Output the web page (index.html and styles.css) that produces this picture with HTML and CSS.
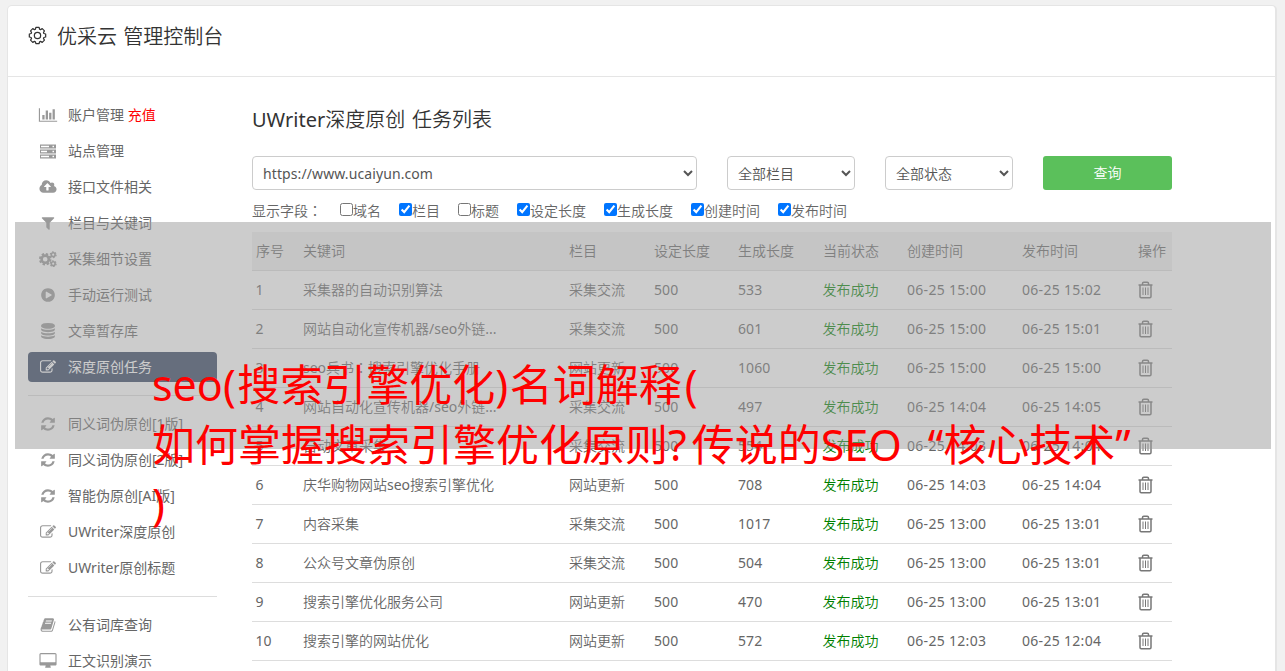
FILE: index.html
```
<!DOCTYPE html>
<html lang="zh-CN">

<head>
    <meta charset="UTF-8">
    <meta name="viewport" content="width=device-width, initial-scale=1.0">
    <title>优采云 管理控制台</title>
    <link rel="stylesheet" href="styles.css">
</head>

<body>
    <!-- Icon sprite -->
    <svg class="sprite" aria-hidden="true">
        <symbol id="i-chart" viewBox="0 0 2048 1792"><path d="M640 896v512h-256v-512h256zm384-512v1024h-256v-1024h256zm1024 1152v128h-2048v-1536h128v1408h1920zm-640-896v768h-256v-768h256zm384-384v1152h-256v-1152h256z"/></symbol>
        <symbol id="i-server" viewBox="0 0 18 16"><path fill-rule="evenodd" d="M1 1.5h16v4H1zM2 2.8v1.4h8V2.8zM1 6.5h16v4H1zM2 7.8v1.4h6V7.8zM1 11.5h16v4H1zM2 12.8v1.4h8v-1.4zM13.5 2.8v1.4H15V2.8zM13.5 7.8v1.4H15V7.8zM13.5 12.8v1.4H15v-1.4z"/></symbol>
        <symbol id="i-cloud" viewBox="0 0 1920 1792"><path d="M1280 864q0-14-9-23l-352-352q-9-9-23-9t-23 9l-351 351q-10 12-10 24 0 14 9 23t23 9h224v352q0 13 9.5 22.5t22.5 9.5h192q13 0 22.5-9.5t9.5-22.5v-352h224q13 0 22.5-9.5t9.5-22.5zm640 288q0 159-112.5 271.5t-271.5 112.5h-1088q-185 0-316.5-131.5t-131.5-316.5q0-130 70-240t188-165q-2-30-2-43 0-212 150-362t362-150q156 0 285.5 87t188.5 231q71-62 166-62 106 0 181 75t75 181q0 76-41 138 130 31 213.5 135.5t83.5 238.5z"/></symbol>
        <symbol id="i-filter" viewBox="0 0 1792 1792"><path d="M1595 295q17 41-14 70l-493 493v742q0 42-39 59-13 5-25 5-27 0-45-19l-256-256q-19-19-19-45v-486l-493-493q-31-29-14-70 17-39 59-39h1280q42 0 59 39z"/></symbol>
        <symbol id="i-cogs" viewBox="0 0 18 16">
            <g fill="none" stroke="currentColor">
                <circle cx="6.2" cy="8.2" r="3.6" stroke-width="2.6"/>
                <circle cx="6.2" cy="8.2" r="5.3" stroke-width="1.9" stroke-dasharray="2.4 1.76"/>
                <circle cx="14.2" cy="3.7" r="1.9" stroke-width="1.6"/>
                <circle cx="14.2" cy="3.7" r="2.9" stroke-width="1.2" stroke-dasharray="1.52 1.52"/>
                <circle cx="14.2" cy="12.7" r="1.9" stroke-width="1.6"/>
                <circle cx="14.2" cy="12.7" r="2.9" stroke-width="1.2" stroke-dasharray="1.52 1.52"/>
            </g>
        </symbol>
        <symbol id="i-play" viewBox="0 0 1792 1792"><path d="M896 128q209 0 385.5 103t279.5 279.5 103 385.5-103 385.5-279.5 279.5-385.5 103-385.5-103-279.5-279.5-103-385.5 103-385.5 279.5-279.5 385.5-103zm384 823q32-18 32-55t-32-55l-544-320q-31-19-64-1-32 19-32 56v640q0 37 32 56 16 8 32 8 17 0 32-9z"/></symbol>
        <symbol id="i-database" viewBox="0 0 1792 1792"><path d="M896 768q237 0 443-43t325-127v170q0 69-103 128t-280 93.5-385 34.5-385-34.5-280-93.5-103-128v-170q119 84 325 127t443 43zm0 768q237 0 443-43t325-127v170q0 69-103 128t-280 93.5-385 34.5-385-34.5-280-93.5-103-128v-170q119 84 325 127t443 43zm0-384q237 0 443-43t325-127v170q0 69-103 128t-280 93.5-385 34.5-385-34.5-280-93.5-103-128v-170q119 84 325 127t443 43zm0-1152q208 0 385 34.5t280 93.5 103 128v128q0 69-103 128t-280 93.5-385 34.5-385-34.5-280-93.5-103-128v-128q0-69 103-128t280-93.5 385-34.5z"/></symbol>
        <symbol id="i-edit" viewBox="0 0 1792 1792"><path d="M888 1184l116-116-152-152-116 116v56h96v96h56zm440-720q-16-16-33 1l-350 350q-17 17-1 33t33-1l350-350q17-17 1-33zm80 594v190q0 119-84.5 203.5t-203.5 84.5h-832q-119 0-203.5-84.5t-84.5-203.5v-832q0-119 84.5-203.5t203.5-84.5h832q63 0 117 25 15 7 18 23 3 17-9 29l-49 49q-14 14-32 8-23-6-45-6h-832q-66 0-113 47t-47 113v832q0 66 47 113t113 47h832q66 0 113-47t47-113v-126q0-13 9-22l64-64q15-15 35-7t20 29zm-96-738l288 288-672 672h-288v-288zm444 132l-92 92-288-288 92-92q28-28 68-28t68 28l152 152q28 28 28 68t-28 68z"/></symbol>
        <symbol id="i-refresh" viewBox="0 0 1792 1792"><path d="M1639 1056q0 5-1 7-64 268-268 434.5t-478 166.5q-146 0-282.5-55t-243.5-157l-129 129q-19 19-45 19t-45-19-19-45v-448q0-26 19-45t45-19h448q26 0 45 19t19 45-19 45l-137 137q71 66 161 102t187 36q134 0 250-65t186-179q11-17 53-117 8-23 30-23h192q13 0 22.5 9.5t9.5 22.5zm25-800v448q0 26-19 45t-45 19h-448q-26 0-45-19t-19-45 19-45l138-138q-148-137-349-137-134 0-250 65t-186 179q-11 17-53 117-8 23-30 23h-199q-13 0-22.5-9.5t-9.5-22.5v-7q65-268 270-434.5t480-166.5q146 0 284 55.5t245 156.5l130-129q19-19 45-19t45 19 19 45z"/></symbol>
        <symbol id="i-book" viewBox="0 0 1792 1792"><path d="M1703 478q40 57 18 129l-275 906q-19 64-76.5 107.5t-122.5 43.5h-923q-77 0-148.5-53.5t-99.5-131.5q-24-67-2-127 0-4 3-27t4-37q1-8-3-21.5t-3-19.5q2-11 8-21t16.5-23.5 16.5-23.5q23-38 45-91.5t30-91.5q3-10 .5-30t-.5-28q3-11 17-28t17-23q21-36 42-92t25-90q1-9-2.5-32t.5-28q4-13 22-30.5t22-22.5q19-26 42.5-84.5t27.5-96.5q1-8-3-25.5t-2-26.5q2-8 9-18t18-23 17-21q8-12 16.5-30.5t15-35 16-36 19.5-32 26.5-23.5 36-11.5 47.5 5.5l-1 3q38-9 51-9h761q74 0 114 56t18 130l-274 906q-36 119-71.5 153.5t-128.5 34.5h-869q-27 0-38 15-11 16-1 43 24 70 144 70h923q29 0 56-15.5t35-41.5l300-987q7-22 5-57 38 15 59 43zm-1064 2q-4 13 2 22.5t20 9.5h608q13 0 25.5-9.5t16.5-22.5l21-64q4-13-2-22.5t-20-9.5h-608q-13 0-25.5 9.5t-16.5 22.5zm-83 256q-4 13 2 22.5t20 9.5h608q13 0 25.5-9.5t16.5-22.5l21-64q4-13-2-22.5t-20-9.5h-608q-13 0-25.5 9.5t-16.5 22.5z"/></symbol>
        <symbol id="i-desktop" viewBox="0 0 1920 1792"><path d="M1792 992v-832q0-13-9.5-22.5t-22.5-9.5h-1600q-13 0-22.5 9.5t-9.5 22.5v832q0 13 9.5 22.5t22.5 9.5h1600q13 0 22.5-9.5t9.5-22.5zm128-832v1088q0 66-47 113t-113 47h-544q0 37 16 77.5t32 71 16 43.5q0 26-19 45t-45 19h-512q-26 0-45-19t-19-45q0-14 16-44t32-70 16-78h-544q-66 0-113-47t-47-113v-1088q0-66 47-113t113-47h1600q66 0 113 47t47 113z"/></symbol>
        <symbol id="i-trash" viewBox="0 0 16 18">
            <g fill="none" stroke="currentColor">
                <path stroke-width="1.5" d="M.5 4h14M4.5 3.8V2.6Q4.5 1.3 5.8 1.3h3.4Q10.5 1.3 10.5 2.6v1.2M2 4.2v11.3q0 1.2 1.2 1.2h8.6q1.2 0 1.2-1.2V4.2"/>
                <path stroke-width="1" d="M5 6.5v7.5M7.5 6.5v7.5M10 6.5v7.5"/>
            </g>
        </symbol>
        <symbol id="i-gear" viewBox="0 0 20 20">
            <g fill="none" stroke="currentColor" stroke-width="1.3">
                <circle cx="10" cy="10" r="3.3"/>
                <path stroke-linejoin="round" d="M8.3 1.5h3.4l.5 1.9 1 .4 1.8-1 2.3 2.3-1 1.8.4 1 1.9.5v3.2l-1.9.5-.4 1 1 1.8-2.3 2.3-1.8-1-1 .4-.5 1.9H8.3l-.5-1.9-1-.4-1.8 1-2.3-2.3 1-1.8-.4-1-1.9-.5V8.4l1.9-.5.4-1-1-1.8L5 2.8l1.8 1 1-.4z"/>
            </g>
        </symbol>
    </svg>

    <div class="panel">
        <header class="panel-header">
            <svg class="gear"><use href="#i-gear"/></svg>
            <h1>优采云 管理控制台</h1>
        </header>

        <div class="panel-body">
            <nav class="sidebar">
                <ul>
                    <li><svg><use href="#i-chart"/></svg><a>账户管理 <span class="recharge">充值</span></a></li>
                    <li><svg><use href="#i-server"/></svg><a>站点管理</a></li>
                    <li><svg><use href="#i-cloud"/></svg><a>接口文件相关</a></li>
                    <li><svg><use href="#i-filter"/></svg><a>栏目与关键词</a></li>
                    <li><svg><use href="#i-cogs"/></svg><a>采集细节设置</a></li>
                    <li><svg><use href="#i-play"/></svg><a>手动运行测试</a></li>
                    <li><svg><use href="#i-database"/></svg><a>文章暂存库</a></li>
                    <li class="active"><svg><use href="#i-edit"/></svg><a>深度原创任务</a></li>
                </ul>
                <ul>
                    <li><svg><use href="#i-refresh"/></svg><a>同义词伪原创[1版]</a></li>
                    <li><svg><use href="#i-refresh"/></svg><a>同义词伪原创[2版]</a></li>
                    <li><svg><use href="#i-refresh"/></svg><a>智能伪原创[AI版]</a></li>
                    <li><svg><use href="#i-edit"/></svg><a><span class="latin">UWriter</span>深度原创</a></li>
                    <li><svg><use href="#i-edit"/></svg><a><span class="latin">UWriter</span>原创标题</a></li>
                </ul>
                <ul>
                    <li><svg><use href="#i-book"/></svg><a>公有词库查询</a></li>
                    <li><svg><use href="#i-desktop"/></svg><a>正文识别演示</a></li>
                </ul>
            </nav>

            <main class="content">
                <h2><span class="latin">UWriter</span>深度原创 任务列表</h2>

                <form class="filters">
                    <select class="site"><option>https://www.ucaiyun.com</option></select>
                    <select><option>全部栏目</option></select>
                    <select><option>全部状态</option></select>
                    <button type="button">查询</button>
                </form>

                <div class="fields">
                    <span class="fields-title">显示字段<span class="colon" lang="zh-TW">：</span></span>
                    <label><input type="checkbox">域名</label>
                    <label><input type="checkbox" checked>栏目</label>
                    <label><input type="checkbox">标题</label>
                    <label><input type="checkbox" checked>设定长度</label>
                    <label><input type="checkbox" checked>生成长度</label>
                    <label><input type="checkbox" checked>创建时间</label>
                    <label><input type="checkbox" checked>发布时间</label>
                </div>

                <table class="tasks">
                    <colgroup>
                        <col class="c-id"><col class="c-word"><col class="c-cat"><col class="c-set"><col class="c-len"><col class="c-state"><col class="c-time"><col class="c-pub"><col class="c-op">
                    </colgroup>
                    <thead>
                        <tr><th>序号</th><th>关键词</th><th>栏目</th><th>设定长度</th><th>生成长度</th><th>当前状态</th><th>创建时间</th><th>发布时间</th><th>操作</th></tr>
                    </thead>
                    <tbody>
                        <tr><td class="num">1</td><td>采集器的自动识别算法</td><td>采集交流</td><td class="num">500</td><td class="num">533</td><td class="ok">发布成功</td><td class="time">06-25 15:00</td><td class="time">06-25 15:02</td><td><svg><use href="#i-trash"/></svg></td></tr>
                        <tr><td class="num">2</td><td>网站自动化宣传机器<span class="latin">/seo</span>外链<span class="latin">...</span></td><td>采集交流</td><td class="num">500</td><td class="num">601</td><td class="ok">发布成功</td><td class="time">06-25 15:00</td><td class="time">06-25 15:01</td><td><svg><use href="#i-trash"/></svg></td></tr>
                        <tr><td class="num">3</td><td><span class="latin">seo</span>兵书<span class="colon" lang="zh-TW">：</span>搜索引擎优化手册</td><td>网站更新</td><td class="num">500</td><td class="num">1060</td><td class="ok">发布成功</td><td class="time">06-25 15:00</td><td class="time">06-25 15:00</td><td><svg><use href="#i-trash"/></svg></td></tr>
                        <tr><td class="num">4</td><td>网站自动化宣传机器<span class="latin">/seo</span>外链<span class="latin">...</span></td><td>采集交流</td><td class="num">500</td><td class="num">497</td><td class="ok">发布成功</td><td class="time">06-25 14:04</td><td class="time">06-25 14:05</td><td><svg><use href="#i-trash"/></svg></td></tr>
                        <tr><td class="num">5</td><td>自动文章采集</td><td>采集交流</td><td class="num">500</td><td class="num">554</td><td class="ok">发布成功</td><td class="time">06-25 14:03</td><td class="time">06-25 14:04</td><td><svg><use href="#i-trash"/></svg></td></tr>
                        <tr><td class="num">6</td><td>庆华购物网站<span class="latin">seo</span>搜索引擎优化</td><td>网站更新</td><td class="num">500</td><td class="num">708</td><td class="ok">发布成功</td><td class="time">06-25 14:03</td><td class="time">06-25 14:04</td><td><svg><use href="#i-trash"/></svg></td></tr>
                        <tr><td class="num">7</td><td>内容采集</td><td>采集交流</td><td class="num">500</td><td class="num">1017</td><td class="ok">发布成功</td><td class="time">06-25 13:00</td><td class="time">06-25 13:01</td><td><svg><use href="#i-trash"/></svg></td></tr>
                        <tr><td class="num">8</td><td>公众号文章伪原创</td><td>采集交流</td><td class="num">500</td><td class="num">504</td><td class="ok">发布成功</td><td class="time">06-25 13:00</td><td class="time">06-25 13:01</td><td><svg><use href="#i-trash"/></svg></td></tr>
                        <tr><td class="num">9</td><td>搜索引擎优化服务公司</td><td>网站更新</td><td class="num">500</td><td class="num">470</td><td class="ok">发布成功</td><td class="time">06-25 13:00</td><td class="time">06-25 13:01</td><td><svg><use href="#i-trash"/></svg></td></tr>
                        <tr><td class="num">10</td><td>搜索引擎的网站优化</td><td>网站更新</td><td class="num">500</td><td class="num">572</td><td class="ok">发布成功</td><td class="time">06-25 12:03</td><td class="time">06-25 12:04</td><td><svg><use href="#i-trash"/></svg></td></tr>
                    </tbody>
                </table>
            </main>
        </div>
    </div>

    <!-- Title banner over the page -->
    <div class="banner">
        <p>seo<span class="paren">(</span>搜索引擎优化<span class="paren">)</span>名词解释<span class="last">(</span><br>如何掌握搜索引擎优化原则<span class="mark">?</span>传说的SEO<span class="quote">“</span>核心技术”<br>)</p>
    </div>
</body>

</html>
```
FILE: styles.css
```
* {
    box-sizing: border-box;
}

body {
    margin: 0;
    height: 671px;
    overflow: hidden;
    background: #f1f1f1;
    color: #666;
    font: 14px/20px "Noto Sans", "Noto Sans CJK SC", sans-serif;
    font-weight: 350;
}

.sprite {
    position: absolute;
    width: 0;
    height: 0;
}

svg {
    fill: currentColor;
}

h1,
h2,
p,
ul {
    margin: 0;
    padding: 0;
    font-weight: normal;
}

.latin {
    font-weight: 400;
}

.panel {
    width: 1270px;
    height: 666px;
    margin: 5px 0 0 7px;
    overflow: hidden;
    background: #fff;
    border: 1px solid #e5e5e5;
    border-right-width: 2px;
    border-bottom: 0;
    border-radius: 5px 5px 0 0;
}

.panel-header {
    display: flex;
    align-items: center;
    height: 71px;
    padding: 0 20px 8px;
    border-bottom: 1px solid #e5e5e5;
    color: #333;
}

.panel-header h1 {
    font-size: 20px;
    font-weight: 350;
    line-height: 30px;
    word-spacing: 1px;
}

.gear {
    width: 19px;
    height: 19px;
    margin: 0 10px 3px 0;
}

.panel-body {
    display: flex;
    padding: 23px 20px 0;
}

/* Sidebar */
.sidebar {
    width: 189px;
    margin-right: 35px;
}

.sidebar ul {
    list-style: none;
}

.sidebar ul + ul {
    margin-top: 13px;
    padding-top: 13px;
    border-top: 1px solid #ddd;
}

.sidebar li {
    display: flex;
    align-items: center;
    height: 30px;
    padding-left: 10px;
    border-radius: 4px;
    white-space: nowrap;
}

.sidebar li + li {
    margin-top: 6px;
}

.sidebar svg {
    width: 20px;
    height: 16px;
    margin-right: 10px;
    color: #999;
}

.recharge {
    color: #f00;
}

.sidebar .active,
.sidebar .active svg {
    color: #fff;
}

.sidebar .active {
    background: #334361;
}

/* Main column */
.content {
    width: 920px;
}

.content h2 {
    margin: 4px 0 21px;
    color: #333;
    font-size: 20px;
    font-weight: 350;
    line-height: 31px;
    word-spacing: 1.5px;
}

.filters {
    display: flex;
    gap: 30px;
}

.filters select {
    width: 128px;
    height: 34px;
    padding: 0 6px;
    border: 1px solid #ccc;
    border-radius: 4px;
    background: #fff;
    color: #555;
    font: inherit;
}

.filters .site {
    width: 445px;
    font-weight: 400;
    letter-spacing: 0.1px;
}

.filters button {
    width: 129px;
    height: 34px;
    border: 0;
    border-radius: 3px;
    background: #5bc05b;
    color: #fff;
    font: inherit;
}

.fields {
    display: flex;
    height: 42px;
    padding-top: 11px;
}

.fields-title {
    width: 88px;
}

/* TC face keeps the full-width colon centred */
.colon {
    font-family: "Noto Sans CJK TC", sans-serif;
    line-height: 1;
}

.fields label {
    display: flex;
    margin-right: 18px;
}

.fields input {
    width: 13px;
    height: 13px;
    margin: 2px 0 0;
}

/* Task table */
.tasks {
    width: 920px;
    border-collapse: separate;
    border-spacing: 0;
    table-layout: fixed;
}

.tasks th,
.tasks td {
    height: 39px;
    padding: 0 4px;
    border-bottom: 1px solid #ddd;
    font-weight: inherit;
    text-align: left;
    white-space: nowrap;
}

.tasks th {
    background: #f0f0f0;
}

.tasks .num,
.tasks .time {
    font-weight: 400;
    letter-spacing: 0.1px;
}

.tasks .num:first-child {
    padding-left: 3.5px;
}

.tasks .time {
    letter-spacing: 0.3px;
}

.tasks .ok {
    padding-left: 3.5px;
    color: #008000;
}

.tasks svg {
    display: block;
    width: 16px;
    height: 18px;
    color: #777;
}

.c-id { width: 47px; }
.c-word { width: 266px; }
.c-cat { width: 85px; }
.c-set { width: 84px; }
.c-len { width: 85px; }
.c-state { width: 84px; }
.c-time { width: 115px; }
.c-pub { width: 116px; }
.c-op { width: 38px; }

/* Banner */
.banner {
    position: absolute;
    left: 15px;
    top: 222px;
    width: 1256px;
    height: 227px;
    padding: 133px 0 0 137px;
    background: rgba(153, 153, 153, 0.5);
    color: #f00;
}

.banner p {
    font-size: 43px;
    line-height: 59.5px;
    white-space: nowrap;
}

.banner .paren {
    letter-spacing: 1.5px;
}

.banner .last {
    padding-left: 3px;
}

.banner .mark {
    letter-spacing: 5px;
}

.banner .quote {
    padding-left: 26px;
}
```
